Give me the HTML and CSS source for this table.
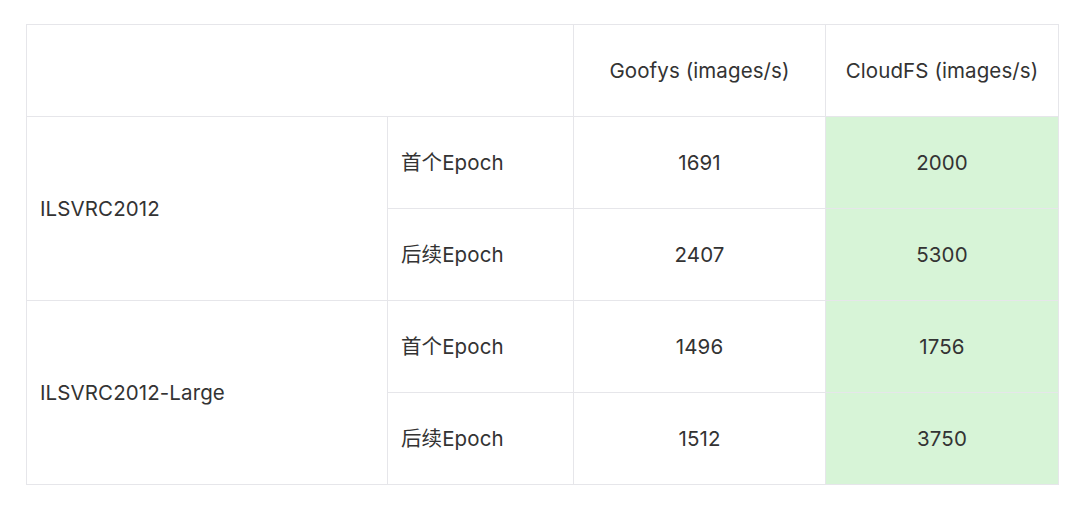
FILE: index.html
```html
<!DOCTYPE html>
<html lang="zh">
<head>
<meta charset="utf-8">
<link rel="stylesheet" href="styles.css">
</head>
<body>
<table class="bench">
  <colgroup>
    <col class="c1"><col class="c2"><col class="c3"><col class="c4">
  </colgroup>
  <tr>
    <th colspan="2"></th>
    <th class="num">Goofys (images/s)</th>
    <th class="num">CloudFS (images/s)</th>
  </tr>
  <tr>
    <td rowspan="2" class="ds">ILSVRC2012</td>
    <td class="ep">首个Epoch</td>
    <td class="num">1691</td>
    <td class="num hi">2000</td>
  </tr>
  <tr>
    <td class="ep">后续Epoch</td>
    <td class="num">2407</td>
    <td class="num hi">5300</td>
  </tr>
  <tr>
    <td rowspan="2" class="ds">ILSVRC2012-Large</td>
    <td class="ep">首个Epoch</td>
    <td class="num">1496</td>
    <td class="num hi">1756</td>
  </tr>
  <tr>
    <td class="ep">后续Epoch</td>
    <td class="num">1512</td>
    <td class="num hi">3750</td>
  </tr>
</table>
</body>
</html>
```
FILE: styles.css
```css
html, body {
  margin: 0;
  padding: 0;
  background: #ffffff;
}
body {
  padding: 24px 0 0 26px;
  font-family: Inter, "Noto Sans CJK SC", sans-serif;
  color: #333333;
}
.bench {
  border-collapse: collapse;
  table-layout: fixed;
  width: 1032px;
}
.c1 { width: 361px; }
.c2 { width: 186px; }
.c3 { width: 252px; }
.c4 { width: 233px; }
.bench th, .bench td {
  border: 1px solid #e6e6ea;
  height: 92px;
  padding: 0 13px;
  font-size: 20.5px;
  font-weight: 400;
  line-height: 24px;
  letter-spacing: 0.1px;
  box-sizing: border-box;
}
.num { text-align: center; }
.ds, .ep { text-align: left; }
.hi { background: #d7f4d7; }
```
